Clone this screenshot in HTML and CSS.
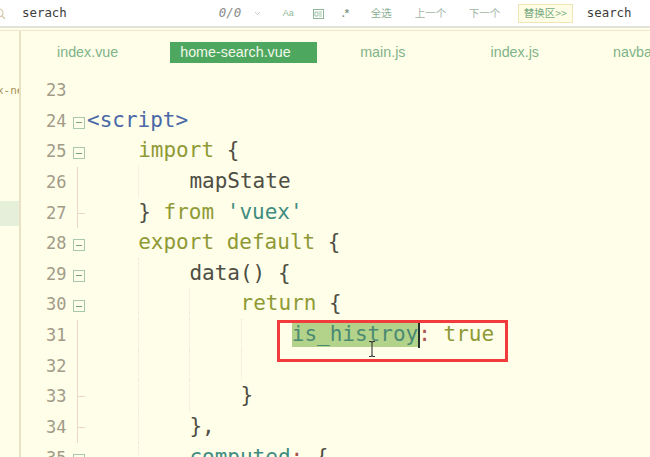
FILE: index.html
```html
<!DOCTYPE html>
<html lang="zh">
<head>
<meta charset="utf-8">
<title>home-search.vue</title>
<link rel="stylesheet" href="styles.css">
</head>
<body>
<div class="app">
  <header class="findbar">
    <svg class="find-icon" width="8" height="14" viewBox="0 0 8 14"><circle cx="-1" cy="6" r="4" fill="none" stroke="#d8c8a8" stroke-width="1.2"/><path d="M2 9l3 3" stroke="#d8c8a8" stroke-width="1.2"/></svg>
    <span class="find-text">serach</span>
    <span class="count">0/0</span>
    <svg class="chev" width="7" height="5" viewBox="0 0 7 5"><path d="M1 1l2.5 2.5L6 1" fill="none" stroke="#c8ccc8" stroke-width="1"/></svg>
    <span class="opt opt-aa">Aa</span>
    <svg class="opt-word" width="11" height="10" viewBox="0 0 11 10"><rect x=".5" y=".5" width="10" height="9" fill="none" stroke="#8fb898"/><path d="M2 3h3v4H2zM6 3h3M6 5h3M6 7h3" fill="none" stroke="#8fb898" stroke-width=".8"/></svg>
    <span class="opt opt-re">.*</span>
    <span class="act act-all">全选</span>
    <span class="act act-prev">上一个</span>
    <span class="act act-next">下一个</span>
    <span class="replace">替换区&gt;&gt;</span>
    <span class="find-text replace-text">search</span>
  </header>
  <div class="main">
    <aside class="side">
      <div class="side-text">x-ne</div>
      <div class="side-active"></div>
    </aside>
    <section class="editor">
      <nav class="tabs">
        <span class="tab tab-a">index.vue</span>
        <span class="tab tab-on">home-search.vue</span>
        <span class="tab tab-b">main.js</span>
        <span class="tab tab-c">index.js</span>
        <span class="tab tab-d">navbar.vue</span>
      </nav>
      <div class="code">
        <div class="row"><span class="num">23</span><span class="fold"></span><span class="src"></span></div>
        <div class="row"><span class="num">24</span><span class="fold box"></span><span class="src"><span class="tag">&lt;script&gt;</span></span></div>
        <div class="row"><span class="num">25</span><span class="fold box"></span><span class="src"><i class="ind"></i><span class="kw">import</span> <span class="pl">{</span></span></div>
        <div class="row"><span class="num">26</span><span class="fold stem"></span><span class="src"><i class="ind"></i><i class="ind g"></i><span class="pl">mapState</span></span></div>
        <div class="row"><span class="num">27</span><span class="fold stem tick"></span><span class="src"><i class="ind"></i><span class="pl">}</span> <span class="kw">from</span> <span class="str">'vuex'</span></span></div>
        <div class="row"><span class="num">28</span><span class="fold box"></span><span class="src"><i class="ind"></i><span class="kw">export default</span> <span class="pl">{</span></span></div>
        <div class="row"><span class="num">29</span><span class="fold box"></span><span class="src"><i class="ind"></i><i class="ind g"></i><span class="pl">data() {</span></span></div>
        <div class="row"><span class="num">30</span><span class="fold box"></span><span class="src"><i class="ind"></i><i class="ind g"></i><i class="ind g"></i><span class="kw">return</span> <span class="pl">{</span></span></div>
        <div class="row"><span class="num">31</span><span class="fold stem"></span><span class="src"><i class="ind"></i><i class="ind g"></i><i class="ind g"></i><i class="ind g"></i><span class="sel">is_histroy</span><span class="caret"></span><span class="punc">:</span> <span class="kw">true</span><svg class="ibeam" width="8" height="18" viewBox="0 0 8 18"><path d="M1 1.5h2l1 1 1-1h2M4 2.5v13M1 16.5h2l1-1 1 1h2" fill="none" stroke="#333" stroke-width="1.1"/></svg></span></div>
        <div class="row"><span class="num">32</span><span class="fold stem"></span><span class="src"><i class="ind"></i><i class="ind g"></i><i class="ind g"></i><i class="ind g"></i></span></div>
        <div class="row"><span class="num">33</span><span class="fold stem tick"></span><span class="src"><i class="ind"></i><i class="ind g"></i><i class="ind g"></i><span class="pl">}</span></span></div>
        <div class="row"><span class="num">34</span><span class="fold stem tick"></span><span class="src"><i class="ind"></i><i class="ind g"></i><span class="pl">},</span></span></div>
        <div class="row"><span class="num">35</span><span class="fold box"></span><span class="src"><i class="ind"></i><i class="ind g"></i><span class="prop">computed</span><span class="punc">:</span> <span class="pl">{</span></span></div>
      </div>
      <div class="redbox"></div>
    </section>
  </div>
</div>
</body>
</html>
```
FILE: styles.css
```css
* { box-sizing: border-box; }
html, body { margin: 0; padding: 0; }
body { width: 650px; height: 457px; overflow: hidden; background: #fffee9; }
.app { width: 650px; height: 457px; display: flex; flex-direction: column; overflow: hidden; }

.findbar {
  height: 28px;
  flex: none;
  display: flex;
  align-items: center;
  background: #fff;
  border-bottom: 2px solid #e4e3da;
  padding-top: 1px;
}
.find-icon { flex: none; margin-right: 14px; }
.find-text { font: 12.4px/1 "DejaVu Sans Mono", monospace; color: #3c3c3c; }
.count { margin-left: 152px; font: italic 12.4px/1 "DejaVu Sans Mono", monospace; color: #8a8a8a; width: 23px; }
.chev { margin-left: 12px; }
.opt { font: 9px/1 "Liberation Sans", sans-serif; color: #8fb898; }
.opt-aa { margin-left: 22px; }
.opt-word { margin-left: 19px; flex: none; }
.opt-re { margin-left: 18px; font-weight: 700; font-size: 11px; color: #7f9c86; width: 9px; }
.act { font: 10.5px/1 "Noto Sans CJK SC", sans-serif; color: #8ab094; white-space: nowrap; }
.act-all { margin-left: 20px; }
.act-prev { margin-left: 23px; color: #a0b4a4; }
.act-next { margin-left: 22.5px; color: #a0b4a4; }
.replace {
  margin-left: 17.5px;
  width: 55px;
  height: 19px;
  display: flex;
  align-items: center;
  justify-content: center;
  font: 10.5px/1 "Noto Sans CJK SC", sans-serif;
  color: #74a97e;
  background: #fffde6;
  border: 1px solid #ece6b8;
  white-space: nowrap;
}
.replace-text { margin-left: 14px; }

.main { flex: 1; display: flex; min-height: 0; border-top: 1px solid #f2e8cf; margin-top: 2px; }
.side { width: 21px; flex: none; border-right: 2px solid #e8e1c6; overflow: hidden; display: flex; flex-direction: column; }
.side-text { margin-top: 53px; font: 11px/14px "DejaVu Sans Mono", monospace; color: #a39058; white-space: nowrap; margin-left: -3px; }
.side-active { margin-top: 103px; height: 25px; background: #e6efd9; }

.editor { flex: 1; min-width: 0; position: relative; overflow: hidden; }

.tabs { display: flex; height: 21px; margin-top: 11px; align-items: center; white-space: nowrap; }
.tab { font: 14.3px/21px "Liberation Sans", sans-serif; color: #7fb388; flex: none; }
.tab-a { margin-left: 36px; }
.tab-on { margin-left: 52px; width: 147px; height: 21px; padding-left: 10px; background: #4ea75f; color: #f2f8ea; }
.tab-b { margin-left: 43px; }
.tab-c { margin-left: 85px; }
.tab-d { margin-left: 74px; }

.code { margin-top: 12px; font: 21px/30.64px "DejaVu Sans Mono", monospace; }
.row { height: 30.64px; display: flex; }
.num { width: 25px; margin-left: 25px; font-size: 17px; color: #a19b88; flex: none; }
.fold { width: 16px; flex: none; position: relative; }
.box::before {
  content: "";
  position: absolute;
  left: 2px;
  top: 11px;
  width: 10px;
  height: 10px;
  border: 1px solid #a9c6ae;
  background: linear-gradient(#7d9c84, #7d9c84) center / 6px 1px no-repeat;
}
.stem::before {
  content: "";
  position: absolute;
  left: 6px;
  top: 0;
  bottom: 0;
  width: 1px;
  background: #ecd6c4;
}
.tick::after {
  content: "";
  position: absolute;
  left: 6px;
  top: 15px;
  width: 8px;
  height: 1px;
  background: #ecd6c4;
}
.src { position: relative; white-space: pre; display: block; flex: 1; margin-top: -1px; }
.ind { display: inline-block; width: 51.2px; height: 30.64px; vertical-align: top; }
.g { border-left: 1px dotted #f0e4d6; }
.tag { color: #4a68a8; }
.kw { color: #8f9a36; }
.pl { color: #4e4e44; }
.str { color: #3f8d80; }
.prop { color: #3f8d80; }
.punc { color: #a8524a; }
.sel { background: #b3d38a; color: #4b8a72; padding: 1.3px 0; }
.caret { display: inline-block; width: 2px; height: 27px; margin-right: -2px; background: #24302a; vertical-align: -7px; }
.ibeam { position: absolute; left: 281px; top: 21px; }

.redbox {
  position: absolute;
  left: 256px;
  top: 289px;
  width: 231px;
  height: 42px;
  border: 3px solid #f23b3b;
}
```
